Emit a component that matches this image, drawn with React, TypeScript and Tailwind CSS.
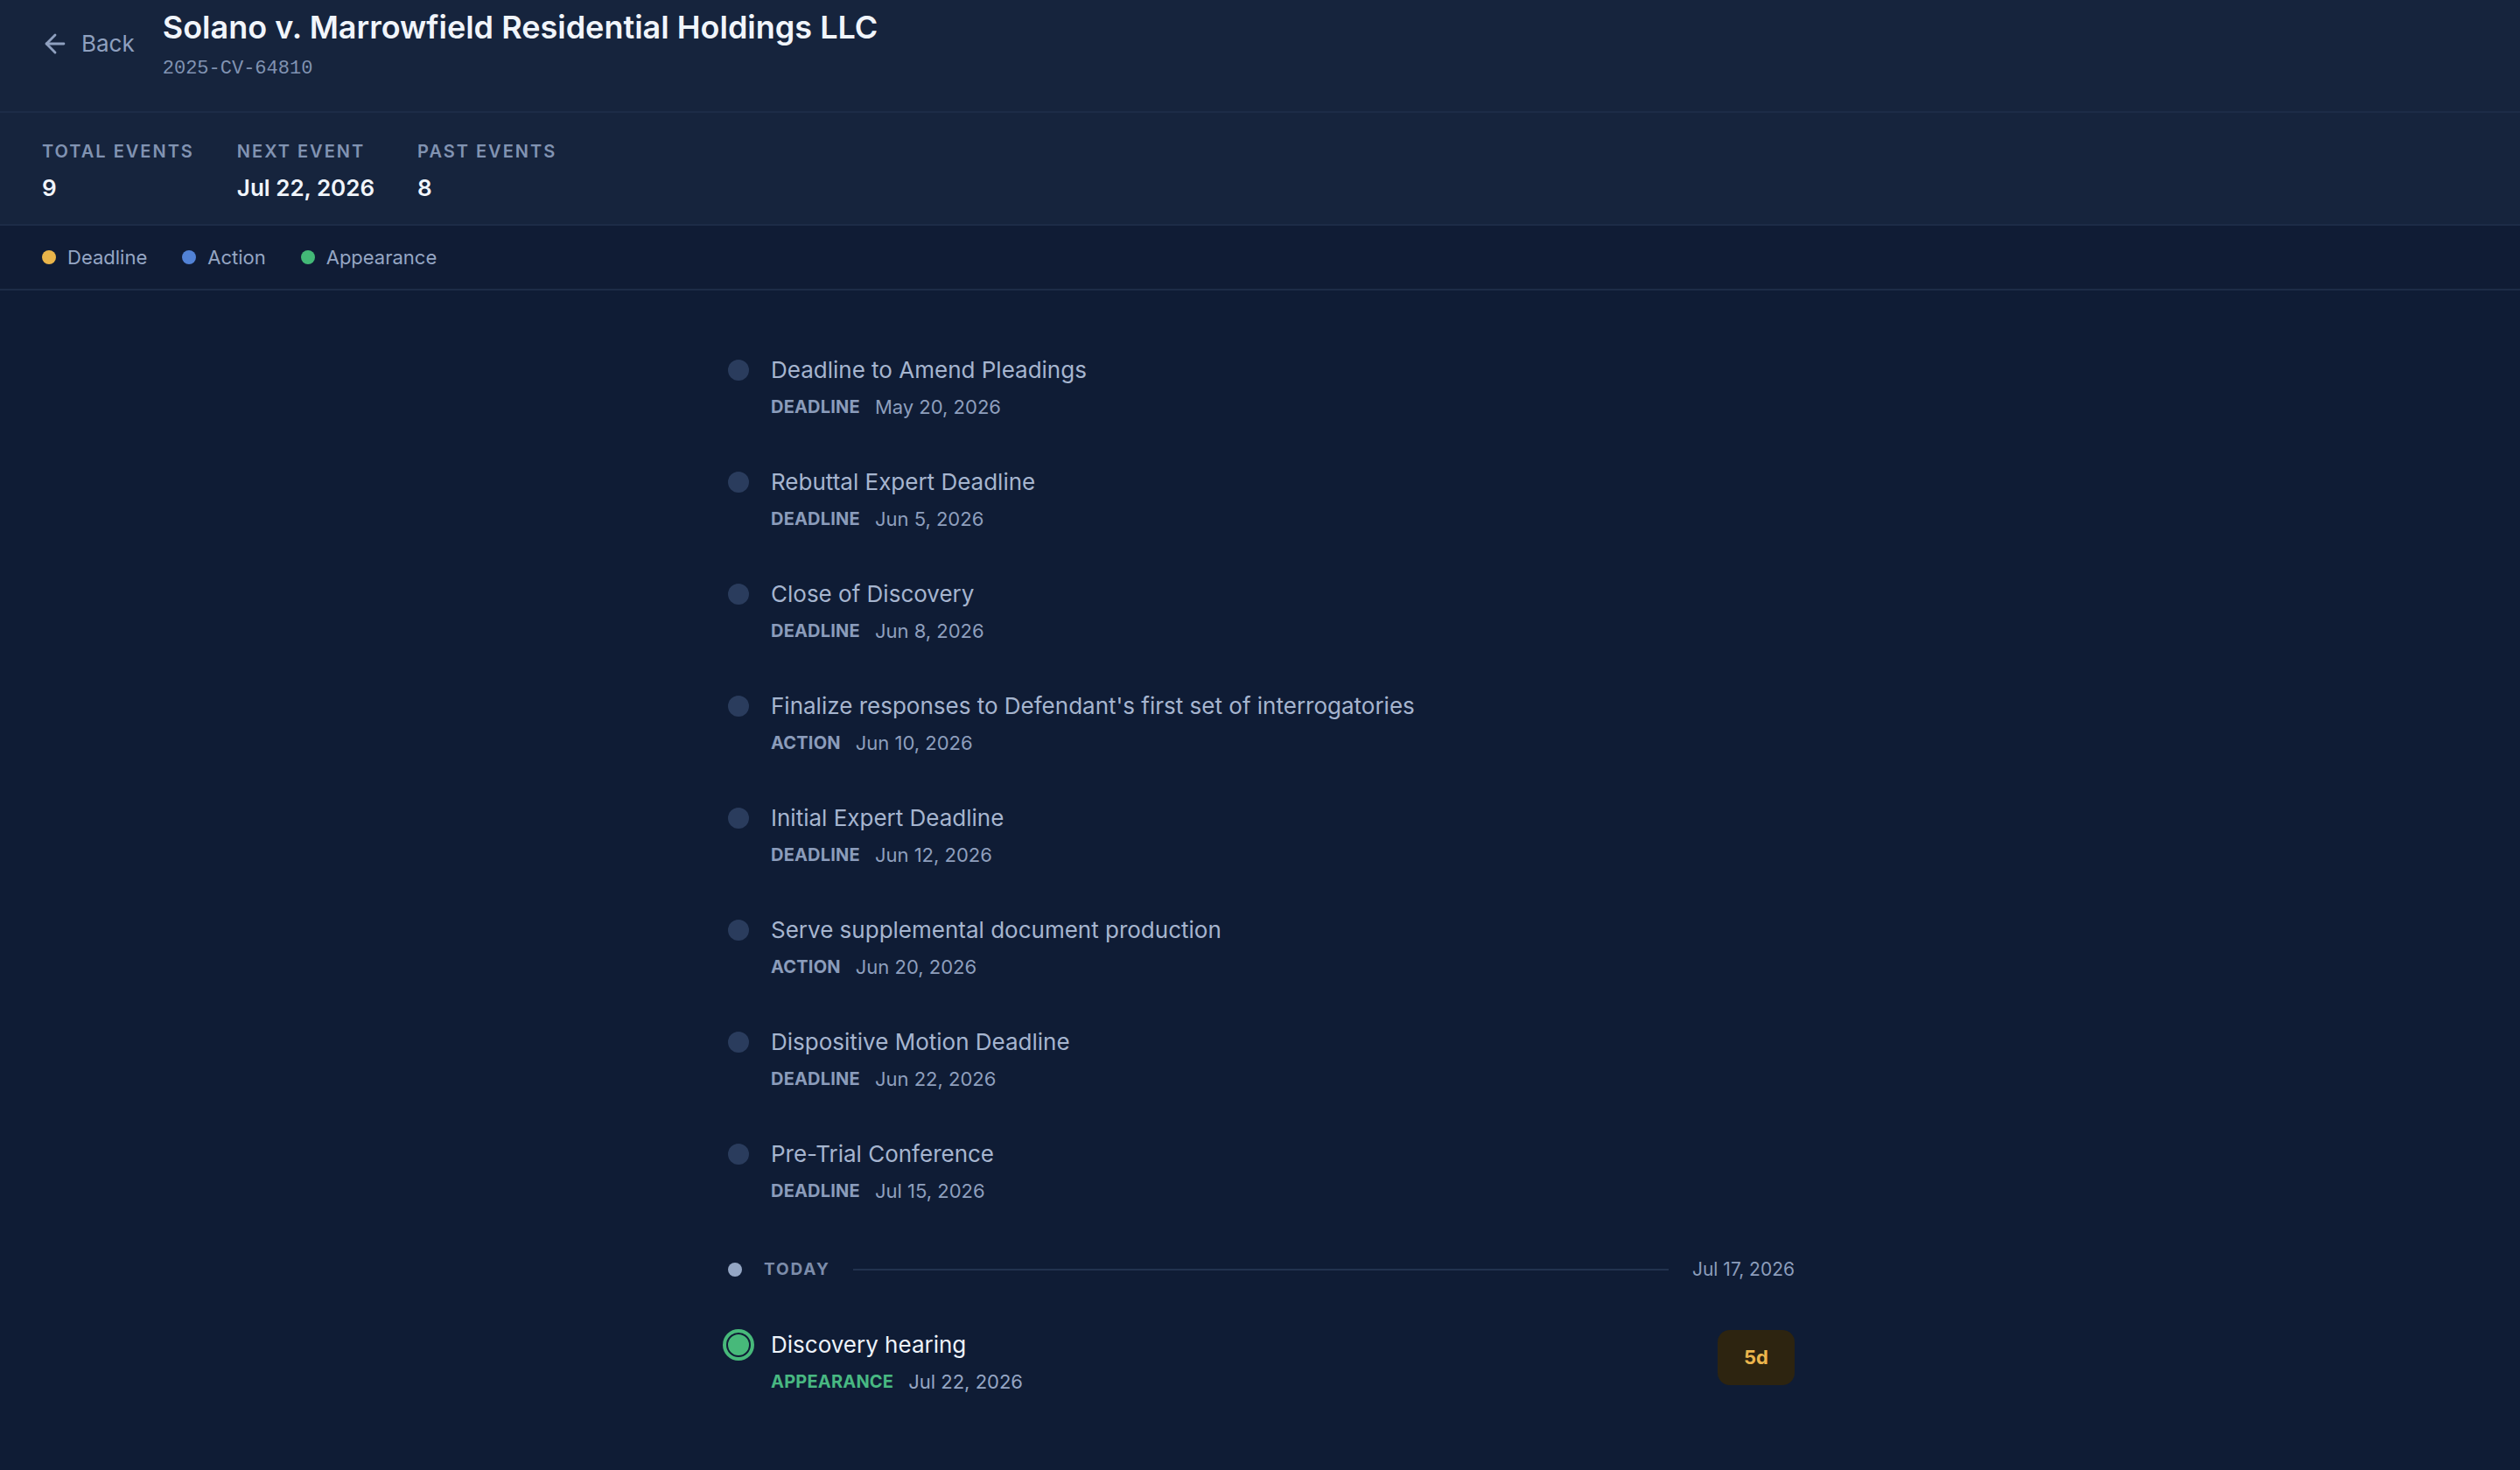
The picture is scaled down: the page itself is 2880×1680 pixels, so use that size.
import React from 'react';
import { ArrowLeft } from 'lucide-react';

interface TimelineEvent {
  title: string;
  kind: 'DEADLINE' | 'ACTION' | 'APPEARANCE';
  date: string;
}

const pastEvents: TimelineEvent[] = [
  { title: 'Deadline to Amend Pleadings', kind: 'DEADLINE', date: 'May 20, 2026' },
  { title: 'Rebuttal Expert Deadline', kind: 'DEADLINE', date: 'Jun 5, 2026' },
  { title: 'Close of Discovery', kind: 'DEADLINE', date: 'Jun 8, 2026' },
  { title: "Finalize responses to Defendant's first set of interrogatories", kind: 'ACTION', date: 'Jun 10, 2026' },
  { title: 'Initial Expert Deadline', kind: 'DEADLINE', date: 'Jun 12, 2026' },
  { title: 'Serve supplemental document production', kind: 'ACTION', date: 'Jun 20, 2026' },
  { title: 'Dispositive Motion Deadline', kind: 'DEADLINE', date: 'Jun 22, 2026' },
  { title: 'Pre-Trial Conference', kind: 'DEADLINE', date: 'Jul 15, 2026' },
];

const legend = [
  { label: 'Deadline', color: 'bg-[#eab54a]' },
  { label: 'Action', color: 'bg-[#5282d6]' },
  { label: 'Appearance', color: 'bg-[#43b977]' },
];

const stats = [
  { label: 'Total Events', value: '9' },
  { label: 'Next Event', value: 'Jul 22, 2026' },
  { label: 'Past Events', value: '8' },
];

const PastRow: React.FC<{ event: TimelineEvent }> = ({ event }) => (
  <div className="flex items-start gap-[22px]">
    <div className="flex-none w-[30px] h-[36px] flex items-center justify-center">
      <div className="w-[24px] h-[24px] rounded-full bg-[#2a3c5d]" />
    </div>
    <div className="flex flex-col gap-[10px]">
      <p className="text-[26px] leading-[36px] text-[#a6b5cf]">{event.title}</p>
      <div className="flex items-center gap-[17px] leading-[28px]">
        <span className="text-[20px] font-bold tracking-[0.01em] text-[#8b9cbb]">{event.kind}</span>
        <span className="text-[22px] text-[#8e9fbd]">{event.date}</span>
      </div>
    </div>
  </div>
);

const App: React.FC = () => {
  return (
    <div className="min-h-screen bg-[#0f1c35] font-['Inter',sans-serif]">
      {/* Header */}
      <header className="bg-[#16243d] flex items-start pl-[46px] pr-[48px] pt-[9px] pb-[33px] border-b-2 border-[#1d2c47]">
        <button className="mt-[24px] flex items-center gap-[13px] text-[#8fa0bf]">
          <ArrowLeft size={34} strokeWidth={2} />
          <span className="text-[26px] leading-[34px]">Back</span>
        </button>
        <div className="ml-[32px]">
          <h1 className="text-[36px] leading-[44px] font-semibold text-[#f1f5fb]">
            Solano v. Marrowfield Residential Holdings LLC
          </h1>
          <p className="mt-[11px] text-[22px] leading-[30px] text-[#8193b2] font-['Liberation_Mono',monospace]">
            2025-CV-64810
          </p>
        </div>
      </header>

      {/* Stats */}
      <section className="bg-[#16243d] flex gap-[49px] px-[48px] pt-[30px] pb-[22px] border-b-2 border-[#1d2c47]">
        {stats.map((s) => (
          <div key={s.label} className="flex flex-col gap-[9px]">
            <span className="text-[20px] leading-[28px] font-semibold uppercase tracking-[0.1em] text-[#8193b2]">
              {s.label}
            </span>
            <span className="text-[26px] leading-[38px] font-semibold text-[#f1f5fb]">{s.value}</span>
          </div>
        ))}
      </section>

      {/* Legend */}
      <section className="flex items-center gap-[40px] px-[48px] h-[74px] border-b-2 border-[#1d2c47] bg-[#101c35]">
        {legend.map((l) => (
          <div key={l.label} className="flex items-center gap-[13px]">
            <span className={`w-[16px] h-[16px] rounded-full ${l.color}`} />
            <span className="text-[22px] text-[#95a6c4]">{l.label}</span>
          </div>
        ))}
      </section>

      {/* Timeline */}
      <main className="w-[1222px] mx-auto pt-[73px] pb-[80px] flex flex-col gap-[54px]">
        {pastEvents.map((e) => (
          <PastRow key={e.title} event={e} />
        ))}

        <div className="mt-[8px] flex items-center h-[28px]">
          <div className="flex-none w-[30px] flex items-center pl-[3px]">
            <div className="w-[16px] h-[16px] rounded-full bg-[#94a6c4]" />
          </div>
          <span className="ml-[14px] text-[19px] font-bold tracking-[0.1em] text-[#7c8caa]">TODAY</span>
          <div className="flex-1 h-[2px] bg-[#22324e] ml-[26px] mr-[27px]" />
          <span className="text-[21px] text-[#8c9dbb]">Jul 17, 2026</span>
        </div>

        <div className="flex items-start">
          <div className="flex-none w-[30px] h-[36px] flex items-center justify-center">
            <div className="flex-none w-[36px] h-[36px] rounded-full bg-[#47b97a] p-[4px]">
              <div className="w-full h-full rounded-full bg-[#47b97a] border-2 border-[#0f1c35]" />
            </div>
          </div>
          <div className="ml-[22px] flex-1 flex flex-col gap-[10px]">
            <p className="text-[26px] leading-[36px] text-[#eef3fa]">Discovery hearing</p>
            <div className="flex items-center gap-[17px] leading-[28px]">
              <span className="text-[20px] font-bold tracking-[0.01em] text-[#48b882]">APPEARANCE</span>
              <span className="text-[22px] text-[#95a6c4]">Jul 22, 2026</span>
            </div>
          </div>
          <div className="flex-none w-[88px] h-[63px] mt-[1px] rounded-[14px] bg-[#2d2410] flex items-center justify-center">
            <span className="text-[22px] font-bold text-[#ebb54c]">5d</span>
          </div>
        </div>
      </main>
    </div>
  );
};

export default App;
